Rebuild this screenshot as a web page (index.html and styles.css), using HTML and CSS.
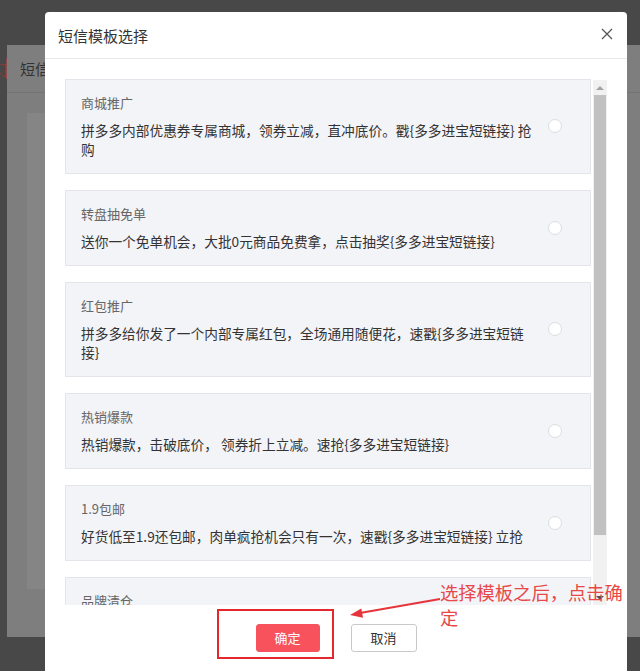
FILE: index.html
```html
<!DOCTYPE html>
<html lang="zh-CN">
<head>
<meta charset="utf-8">
<title>短信模板选择</title>
<link rel="stylesheet" href="styles.css">
</head>
<body>
  <div class="behind">
    <div class="behind-head"><span class="behind-tab">订</span><span class="behind-title">短信</span></div>
    <div class="behind-inner"></div>
  </div>

  <div class="modal">
    <div class="modal-head">
      <span class="modal-title">短信模板选择</span>
      <svg class="close" width="12" height="12" viewBox="0 0 12 12"><path d="M1 1L11 11M11 1L1 11" stroke="#555" stroke-width="1.3" fill="none"/></svg>
    </div>
    <div class="modal-body">
      <div class="list">
        <div class="cards">
          <div class="card">
            <div class="card-text">
              <div class="card-title">商城推广</div>
              <div class="card-desc">拼多多内部优惠券专属商城，领券立减，直冲底价。戳{多多进宝短链接} 抢购</div>
            </div>
            <span class="radio"></span>
          </div>
          <div class="card">
            <div class="card-text">
              <div class="card-title">转盘抽免单</div>
              <div class="card-desc">送你一个免单机会，大批0元商品免费拿，点击抽奖{多多进宝短链接}</div>
            </div>
            <span class="radio"></span>
          </div>
          <div class="card">
            <div class="card-text">
              <div class="card-title">红包推广</div>
              <div class="card-desc">拼多多给你发了一个内部专属红包，全场通用随便花，速戳{多多进宝短链接}</div>
            </div>
            <span class="radio"></span>
          </div>
          <div class="card">
            <div class="card-text">
              <div class="card-title">热销爆款</div>
              <div class="card-desc">热销爆款，击破底价， 领券折上立减。速抢{多多进宝短链接}</div>
            </div>
            <span class="radio"></span>
          </div>
          <div class="card">
            <div class="card-text">
              <div class="card-title">1.9包邮</div>
              <div class="card-desc">好货低至1.9还包邮，肉单疯抢机会只有一次，速戳{多多进宝短链接} 立抢</div>
            </div>
            <span class="radio"></span>
          </div>
          <div class="card">
            <div class="card-text">
              <div class="card-title">品牌清仓</div>
              <div class="card-desc">品牌清仓，大牌好货低价抢，速戳{多多进宝短链接}</div>
            </div>
            <span class="radio"></span>
          </div>
        </div>
        <div class="scrollbar">
          <div class="sb-btn"><span class="tri-up"></span></div>
          <div class="sb-thumb"></div>
          <div class="sb-track"></div>
          <div class="sb-btn"><span class="tri-down"></span></div>
        </div>
      </div>
      <div class="footer">
        <button class="btn btn-primary">确定</button>
        <button class="btn btn-default">取消</button>
      </div>
    </div>
  </div>

  <div class="note-box"></div>
  <svg class="note-arrow" width="100" height="30" viewBox="345 595 100 30">
    <line x1="440" y1="599" x2="360" y2="613" stroke="#e5353b" stroke-width="2"/>
    <polygon points="350,615 363,617.8 361.3,608.6" fill="#e5353b"/>
  </svg>
  <div class="note-text">选择模板之后，点击确定</div>
</body>
</html>
```

FILE: styles.css
```css
* { box-sizing: border-box; }

body {
  margin: 0;
  width: 640px;
  height: 671px;
  overflow: hidden;
  position: relative;
  background: #484848;
  font-family: "Noto Sans CJK SC", "Noto Sans", sans-serif;
}

/* dimmed page behind the modal */
.behind {
  position: absolute;
  left: 7px;
  top: 45px;
  width: 640px;
  height: 592px;
  background: #7e7e7e;
}
.behind-head {
  height: 48px;
  border-bottom: 1px solid #747474;
  display: flex;
  align-items: center;
  font-size: 15px;
  color: #333;
}
.behind-tab {
  margin-left: -13px;
  width: 13px;
  color: #8a3a3a;
  border-right: 1px solid #8a4a4a;
  overflow: hidden;
}
.behind-title {
  margin-left: 13px;
}
.behind-inner {
  margin: 20px 0 0 20px;
  width: 300px;
  height: 476px;
  background: #858585;
}

/* modal */
.modal {
  position: absolute;
  left: 45px;
  top: 12px;
  width: 582px;
  height: 680px;
  background: #fff;
  border-radius: 4px;
}
.modal-head {
  height: 47px;
  border-bottom: 1px solid #e8e8e8;
  padding: 0 14px 0 13px;
  display: flex;
  align-items: center;
  justify-content: space-between;
}
.modal-title {
  font-size: 15px;
  color: #333;
}
.close {
  display: block;
  margin-top: -2px;
}

.modal-body {
  padding: 20px 20px 0 20px;
}
.list {
  display: flex;
  height: 526px;
}
.cards {
  flex: 1;
  overflow: hidden;
  display: flex;
  flex-direction: column;
  gap: 16px;
}
.card {
  flex: none;
  display: flex;
  align-items: center;
  background: #f3f4f8;
  border: 1px solid #e3e5ea;
  padding: 13px 0 14px 15px;
}
.card-text {
  width: 455px;
}
.card-title {
  font-size: 13px;
  line-height: 20px;
  color: #666;
  margin-bottom: 8px;
}
.card-desc {
  font-size: 13.7px;
  line-height: 19px;
  color: #333;
}
.radio {
  margin-left: auto;
  margin-right: 28px;
  width: 14px;
  height: 14px;
  border-radius: 50%;
  background: #fff;
  border: 1px solid #dcdde2;
  flex: none;
}

/* fake scrollbar */
.scrollbar {
  width: 14px;
  margin-left: 2px;
  display: flex;
  flex-direction: column;
  background: #f1f1f1;
  margin-top: 1px;
}
.sb-btn {
  height: 15px;
  display: flex;
  align-items: center;
  justify-content: center;
}
.tri-up {
  width: 0; height: 0;
  border-left: 4px solid transparent;
  border-right: 4px solid transparent;
  border-bottom: 4px solid #a3a3a3;
}
.tri-down {
  width: 0; height: 0;
  border-left: 4px solid transparent;
  border-right: 4px solid transparent;
  border-top: 4px solid #505050;
}
.sb-thumb {
  height: 440px;
  margin: 0 1px;
  background: #c1c1c1;
}
.sb-track {
  flex: 1;
}

.footer {
  display: flex;
  justify-content: center;
  gap: 31px;
  padding-top: 19px;
}
.btn {
  font-family: inherit;
  font-size: 13px;
  height: 28px;
  border-radius: 3px;
  padding: 0;
  line-height: 26px;
}
.btn-primary {
  width: 64px;
  background: #f8525d;
  border: 1px solid #f8525d;
  color: #fff;
}
.btn-default {
  width: 66px;
  background: #fff;
  border: 1px solid #c9c9c9;
  color: #333;
}

/* annotation */
.note-box {
  position: absolute;
  left: 217px;
  top: 609px;
  width: 117px;
  height: 50px;
  border: 2.5px solid #e5282e;
}
.note-arrow {
  position: absolute;
  left: 345px;
  top: 595px;
}
.note-text {
  position: absolute;
  left: 440px;
  top: 580px;
  width: 192px;
  font-size: 18.3px;
  line-height: 25px;
  color: #e84848;
}
```
